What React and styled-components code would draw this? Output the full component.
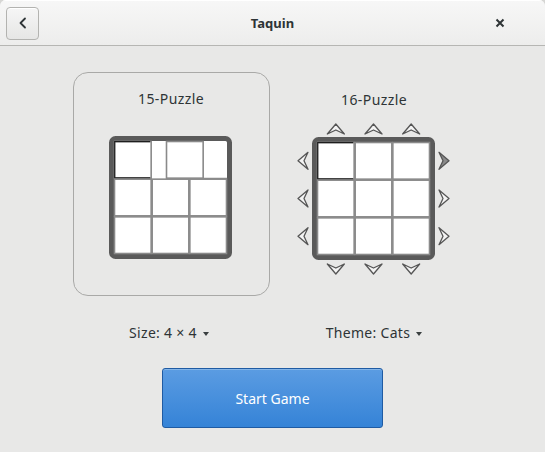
import React from 'react';
import styled, { createGlobalStyle } from 'styled-components';

const GlobalStyle = createGlobalStyle`
  html, body {
    margin: 0;
    padding: 0;
    background: #d6d6d4;
  }
  body {
    font-family: 'Noto Sans', 'DejaVu Sans', sans-serif;
    color: #2e3436;
  }
`;

const Window = styled.div`
  width: 545px;
  height: 452px;
  display: flex;
  flex-direction: column;
  background: #e8e8e7;
  border-radius: 6px 6px 0 0;
  overflow: hidden;
`;

const HeaderBar = styled.header`
  height: 45px;
  border-bottom: 1px solid #b6b6b3;
  background: linear-gradient(to bottom, #f7f7f7, #ededec);
  display: grid;
  grid-template-columns: 1fr auto 1fr;
  align-items: center;
  padding: 0 6px;
  box-shadow: inset 0 1px 0 #ffffff;
`;

const BackButton = styled.button`
  justify-self: start;
  width: 33px;
  height: 33px;
  margin-top: 1px;
  border: 1px solid #b3b3b0;
  border-radius: 4px;
  background: linear-gradient(to bottom, #f6f6f6, #e6e6e5);
  display: flex;
  align-items: center;
  justify-content: center;
  padding: 0;
  box-shadow: inset 0 1px 0 #ffffff;
`;

const Title = styled.h1`
  margin: 0;
  font-size: 13px;
  font-weight: 700;
  color: #2e3436;
`;

const CloseButton = styled.button`
  justify-self: end;
  margin-right: 31px;
  width: 16px;
  height: 16px;
  border: none;
  background: none;
  padding: 0;
  display: flex;
  align-items: center;
  justify-content: center;
`;

const Content = styled.main`
  flex: 1;
  display: flex;
  flex-direction: column;
  align-items: center;
  padding-top: 26px;
`;

const Columns = styled.div`
  display: grid;
  grid-template-columns: 197px 197px;
  column-gap: 6px;
  row-gap: 29px;
`;

const Choice = styled.div`
  border: 1px solid ${(p) => (p.selected ? '#a9a9a7' : 'transparent')};
  border-radius: 15px;
  padding: 18px 0 16px;
  display: flex;
  flex-direction: column;
  align-items: center;
`;

const ChoiceLabel = styled.div`
  font-size: 14px;
  letter-spacing: 0.4px;
  line-height: 16px;
  margin-top: ${(p) => (p.shift ? '1px' : '0')};
  margin-bottom: 11px;
`;

const Preview = styled.svg`
  display: block;
  width: 160px;
  height: 160px;
`;

const Dropdown = styled.div`
  justify-self: center;
  font-size: 14px;
  letter-spacing: 0.3px;
  line-height: 16px;
  display: flex;
  align-items: center;
  gap: 6px;
  margin-left: ${(p) => p.offset || 0}px;
`;

const Caret = styled.span`
  width: 0;
  height: 0;
  margin-top: 2px;
  border-left: 3px solid transparent;
  border-right: 3px solid transparent;
  border-top: 4px solid #3a3f40;
`;

const StartButton = styled.button`
  margin-top: 27px;
  width: 221px;
  height: 60px;
  border: 1px solid #1f5ba3;
  border-radius: 3px;
  background: linear-gradient(to bottom, #5b9ce2, #3583d7);
  color: #ffffff;
  font-family: 'Noto Sans', 'DejaVu Sans', sans-serif;
  font-size: 14px;
  box-shadow: inset 0 1px 0 rgba(255, 255, 255, 0.25);
`;

const TILE = 113 / 3;
const X0 = 23;

const Tile = ({ x, y, dark }) => (
  <g>
    <rect x={x + 0.5} y={y + 0.5} width={TILE - 1} height={TILE - 1} fill="#ffffff" stroke="#8a8a8a" strokeWidth="1.6" />
    {dark && (
      <path
        d={`M${x + TILE - 1.5} ${y + 0.7} L${x + 0.7} ${y + 0.7} L${x + 0.7} ${y + TILE - 0.7} L${x + TILE - 1.5} ${y + TILE - 0.7}`}
        fill="none"
        stroke="#1e1e1e"
        strokeWidth="1.2"
      />
    )}
  </g>
);

const Frame = ({ children }) => (
  <g>
    <rect x="20.5" y="20.5" width="118" height="118" rx="4" fill="#ffffff" stroke="#5a5a5a" strokeWidth="5" />
    {children}
  </g>
);

const Arrow = ({ cx, cy, rot, dark }) => (
  <path
    d="M-8.5 5 L0 -5 L8.5 5 L0 1 Z"
    transform={`translate(${cx} ${cy}) rotate(${rot})`}
    fill={dark ? '#8a8a8a' : '#f4f4f4'}
    stroke="#555555"
    strokeWidth="1.3"
    strokeLinejoin="round"
  />
);

const FifteenPreview = () => (
  <Preview viewBox="0 0 160 160">
    <Frame>
      <Tile x={X0} y={X0} dark />
      <Tile x={75} y={X0} />
      <line x1="112" y1={X0 + TILE} x2="136" y2={X0 + TILE} stroke="#8a8a8a" strokeWidth="1.6" />
      {[1, 2].map((r) =>
        [0, 1, 2].map((c) => <Tile key={`${r}-${c}`} x={X0 + c * TILE} y={X0 + r * TILE} />)
      )}
    </Frame>
  </Preview>
);

const centers = [0, 1, 2].map((i) => X0 + i * TILE + TILE / 2);

const SixteenPreview = () => (
  <Preview viewBox="0 0 160 160">
    <Frame>
      {[0, 1, 2].map((r) =>
        [0, 1, 2].map((c) => <Tile key={`${r}-${c}`} x={X0 + c * TILE} y={X0 + r * TILE} dark={r === 0 && c === 0} />)
      )}
    </Frame>
    {centers.map((c) => (
      <Arrow key={`u${c}`} cx={c} cy={10} rot={0} />
    ))}
    {centers.map((c) => (
      <Arrow key={`d${c}`} cx={c} cy={150} rot={180} />
    ))}
    {centers.map((c) => (
      <Arrow key={`l${c}`} cx={9} cy={c} rot={-90} />
    ))}
    {centers.map((c, i) => (
      <Arrow key={`r${c}`} cx={150} cy={c} rot={90} dark={i === 0} />
    ))}
  </Preview>
);

const App = () => (
  <>
    <GlobalStyle />
    <Window>
      <HeaderBar>
        <BackButton aria-label="Back">
          <svg width="16" height="16" viewBox="0 0 16 16">
            <path d="M10 3.5 L5.5 8 L10 12.5" fill="none" stroke="#2e3436" strokeWidth="1.8" strokeLinecap="round" strokeLinejoin="round" />
          </svg>
        </BackButton>
        <Title>Taquin</Title>
        <CloseButton aria-label="Close">
          <svg width="10" height="10" viewBox="0 0 10 10">
            <path d="M1.5 1.5 L8.5 8.5 M8.5 1.5 L1.5 8.5" stroke="#2e3436" strokeWidth="2" />
          </svg>
        </CloseButton>
      </HeaderBar>
      <Content>
        <Columns>
          <Choice selected>
            <ChoiceLabel>15-Puzzle</ChoiceLabel>
            <FifteenPreview />
          </Choice>
          <Choice>
            <ChoiceLabel shift>16-Puzzle</ChoiceLabel>
            <SixteenPreview />
          </Choice>
          <Dropdown offset={-4}>
            Size: 4 × 4 <Caret />
          </Dropdown>
          <Dropdown>
            Theme: Cats <Caret />
          </Dropdown>
        </Columns>
        <StartButton>Start Game</StartButton>
      </Content>
    </Window>
  </>
);

export default App;
